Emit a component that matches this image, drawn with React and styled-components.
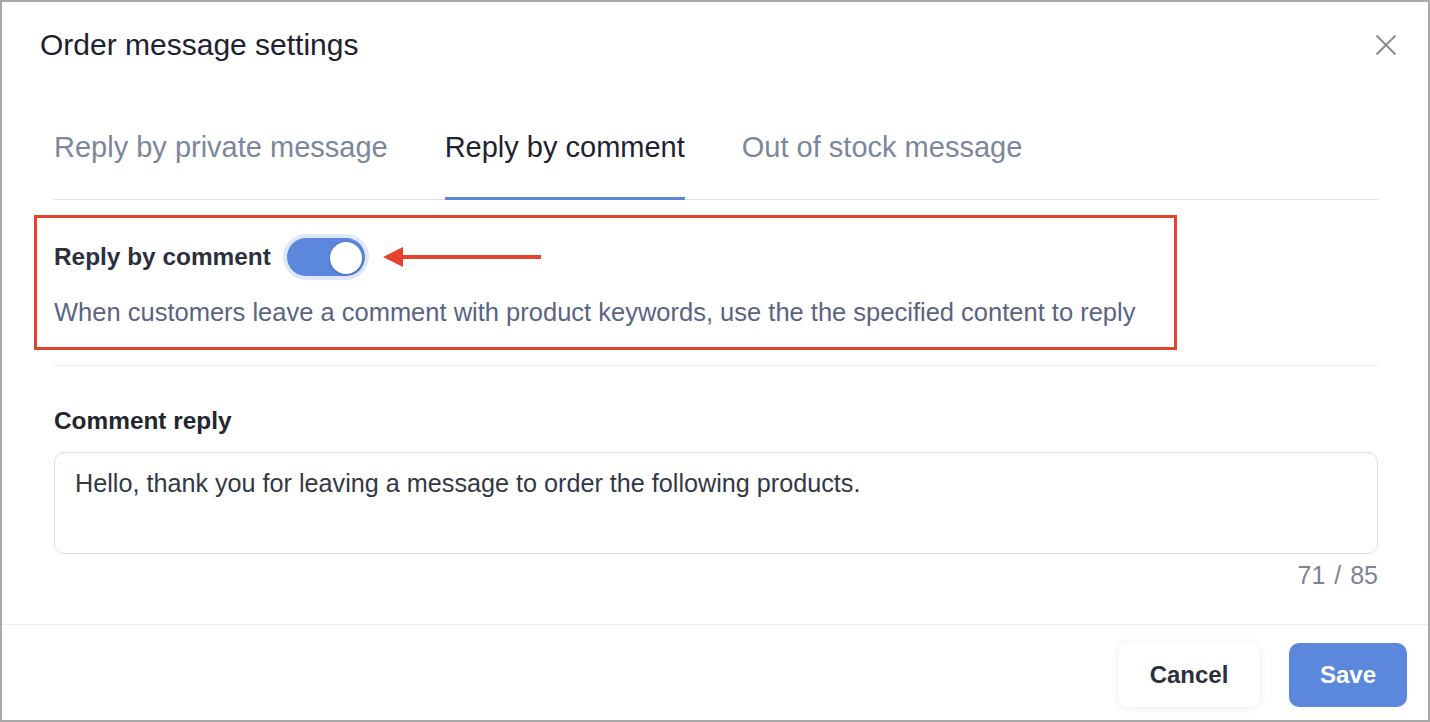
import React, { useState } from 'react';
import styled, { createGlobalStyle } from 'styled-components';

const GlobalStyle = createGlobalStyle`
  html, body {
    margin: 0;
    padding: 0;
    background: #fff;
  }
  body {
    font-family: 'Liberation Sans', Arial, Helvetica, sans-serif;
  }
`;

const tabs = ['Reply by private message', 'Reply by comment', 'Out of stock message'];

function App() {
    const [active, setActive] = useState(1);
    const [on, setOn] = useState(true);
    const [text, setText] = useState('Hello, thank you for leaving a message to order the following products.');

    return (
        <>
            <GlobalStyle />
            <Frame>
                <Header>
                    <Title>Order message settings</Title>
                    <CloseButton aria-label="close">
                        <svg width="22" height="22" viewBox="0 0 22 22">
                            <path d="M1.5 1.5 L20.5 20.5 M20.5 1.5 L1.5 20.5" stroke="#8c8c8c" strokeWidth="2" fill="none" />
                        </svg>
                    </CloseButton>
                </Header>

                <Body>
                    <TabBar>
                        {tabs.map((t, i) => (
                            <Tab key={t} active={i === active} onClick={() => setActive(i)}>{t}</Tab>
                        ))}
                    </TabBar>

                    <Highlight>
                        <SwitchRow>
                            <Label>Reply by comment</Label>
                            <Track on={on} onClick={() => setOn(!on)}>
                                <Knob />
                            </Track>
                            <Arrow width="158" height="22" viewBox="0 0 158 22">
                                <polygon points="0,11 20,1 20,21" fill="#e5432b" />
                                <rect x="18" y="9" width="140" height="4" fill="#e5432b" />
                            </Arrow>
                        </SwitchRow>
                        <Desc>When customers leave a comment with product keywords, use the the specified content to reply</Desc>
                    </Highlight>

                    <Divider />

                    <FieldLabel>Comment reply</FieldLabel>
                    <TextArea value={text} onChange={e => setText(e.target.value)} />
                    <Counter>71 / 85</Counter>
                </Body>

                <Footer>
                    <Button>Cancel</Button>
                    <Button primary>Save</Button>
                </Footer>
            </Frame>
        </>
    );
}

const Frame = styled.div`
    width: 1430px;
    height: 722px;
    box-sizing: border-box;
    border: 2px solid #a9a9a9;
    background: #fff;
    display: flex;
    flex-direction: column;
`

const Header = styled.div`
    display: flex;
    align-items: center;
    justify-content: space-between;
    height: 36px;
    padding: 25px 31px 0 38px;
`

const Title = styled.h1`
    margin: 0;
    font-size: 30px;
    line-height: 36px;
    font-weight: 400;
    color: #1e2130;
`

const CloseButton = styled.button`
    border: none;
    background: none;
    padding: 0;
    width: 22px;
    height: 22px;
    display: flex;
    cursor: pointer;
`

const Body = styled.div`
    flex: 1;
    padding: 0 50px 0 52px;
    display: flex;
    flex-direction: column;
`

const TabBar = styled.div`
    display: flex;
    gap: 57px;
    margin-top: 67px;
    border-bottom: 1px solid #dcdfe5;
`

const Tab = styled.div`
    font-size: 29px;
    line-height: 34px;
    padding-bottom: 33px;
    margin-bottom: -1px;
    color: ${p => p.active ? '#1f2330' : '#7d879c'};
    border-bottom: 3px solid ${p => p.active ? '#5b87dd' : 'transparent'};
    cursor: pointer;
`

const Highlight = styled.div`
    margin: 15px 0 0 -20px;
    width: 1143px;
    height: 135px;
    box-sizing: border-box;
    border: 3px solid #e5432b;
    padding: 20px 0 0 17px;
`

const SwitchRow = styled.div`
    display: flex;
    align-items: center;
    height: 38px;
`

const Label = styled.span`
    font-size: 24.4px;
    font-weight: 700;
    color: #2b303d;
`

const Track = styled.div`
    margin-left: 16px;
    width: 78px;
    height: 38px;
    border-radius: 19px;
    box-sizing: border-box;
    padding: 3px;
    background: ${p => p.on ? '#5b87dd' : '#c8ccd4'};
    box-shadow: 0 0 0 4px #dfe7f8;
    display: flex;
    justify-content: ${p => p.on ? 'flex-end' : 'flex-start'};
    align-items: center;
    cursor: pointer;
`

const Knob = styled.div`
    width: 32px;
    height: 32px;
    border-radius: 50%;
    background: #fff;
    box-shadow: 0 1px 3px rgba(30, 50, 110, 0.35);
    margin-top: 2px;
`

const Arrow = styled.svg`
    margin-left: 18px;
    display: block;
`

const Desc = styled.p`
    margin: 21px 0 0;
    font-size: 25.5px;
    line-height: 30px;
    color: #5a6482;
    white-space: nowrap;
`

const Divider = styled.hr`
    margin: 15px 0 0;
    border: none;
    border-top: 1px solid #ececec;
    height: 0;
`

const FieldLabel = styled.div`
    margin-top: 40px;
    font-size: 24.4px;
    line-height: 30px;
    font-weight: 700;
    color: #23262f;
`

const TextArea = styled.textarea`
    margin-top: 16px;
    width: 100%;
    height: 102px;
    box-sizing: border-box;
    border: 1px solid #d8dee8;
    border-radius: 10px;
    padding: 15px 20px;
    font-family: 'Liberation Sans', Arial, sans-serif;
    font-size: 25.2px;
    line-height: 30px;
    color: #333846;
    resize: none;
    outline: none;
    display: block;
`

const Counter = styled.div`
    margin-top: 6px;
    text-align: right;
    font-size: 25px;
    line-height: 30px;
    color: #7d8497;
    word-spacing: 2px;
`

const Footer = styled.div`
    height: 96px;
    box-sizing: border-box;
    border-top: 1px solid #efefef;
    padding: 18px 21px 0 0;
    display: flex;
    justify-content: flex-end;
    align-items: flex-start;
    gap: 29px;
`

const Button = styled.button`
    height: 64px;
    width: ${p => p.primary ? '118px' : '142px'};
    border: none;
    border-radius: 10px;
    font-family: 'Liberation Sans', Arial, sans-serif;
    font-size: 24px;
    font-weight: 700;
    color: ${p => p.primary ? '#fff' : '#2b303d'};
    background: ${p => p.primary ? '#5b87dd' : '#fff'};
    box-shadow: ${p => p.primary ? 'none' : '0 1px 8px rgba(0, 0, 0, 0.09)'};
    cursor: pointer;
`

export default App;
